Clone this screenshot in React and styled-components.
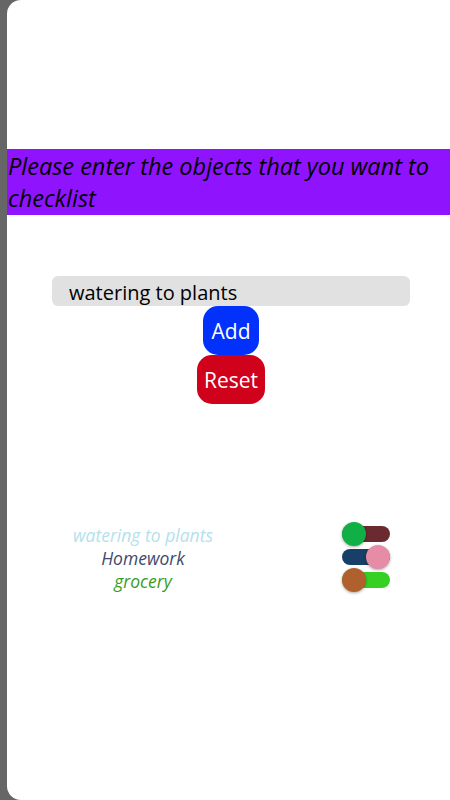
import React, { useState } from 'react';
import styled, { createGlobalStyle } from 'styled-components';

const GlobalStyle = createGlobalStyle`
    html, body {
        overflow: hidden;
    }
    body {
        margin: 0;
        background: #666666;
        font-family: 'Open Sans', 'Noto Sans', sans-serif;
    }
`;

const Frame = styled.div`
    margin-left: 7px;
    min-height: 800px;
    background: #ffffff;
    border-radius: 14px 0 0 14px;
    overflow: hidden;
    padding-top: 149px;
    box-sizing: border-box;
`;

const Banner = styled.h1`
    margin: 0;
    background: #9013fe;
    color: #000;
    font-size: 23.5px;
    font-style: italic;
    font-weight: 500;
    line-height: 32px;
    padding: 1px 0 1px 1px;
`;

const Form = styled.div`
    display: flex;
    flex-direction: column;
    align-items: center;
    margin-top: 61px;
    padding-left: 5px;
`;

const TextBox = styled.input`
    box-sizing: border-box;
    width: 358px;
    height: 30px;
    border: none;
    border-radius: 6px;
    background: #e1e1e1;
    padding: 2px 0 0 17px;
    font-family: 'Open Sans', 'Noto Sans', sans-serif;
    font-size: 20px;
    color: #000;
    outline: none;
`;

const Button = styled.button`
    border: none;
    border-radius: 15px;
    background: ${({ tone }) => tone};
    color: #fff;
    font-family: 'Open Sans', 'Noto Sans', sans-serif;
    font-size: 21px;
    height: 49px;
    padding: 0 ${({ pad }) => pad}px;
    cursor: pointer;
`;

const List = styled.div`
    margin-top: 119px;
    display: flex;
    flex-direction: column;
    gap: 6px;
`;

const Row = styled.div`
    display: grid;
    grid-template-columns: 272px 48px;
    column-gap: 63px;
    align-items: center;
    height: 17px;
`;

const Item = styled.span`
    text-align: center;
    font-style: italic;
    font-size: 17.5px;
    color: ${({ color }) => color};
`;

const Track = styled.div`
    position: relative;
    width: 48px;
    height: 16px;
    margin-top: -3px;
    border-radius: 8px;
    background: ${({ color }) => color};
    cursor: pointer;
`;

const Knob = styled.div`
    position: absolute;
    top: -4px;
    left: ${({ on }) => (on ? '24px' : '0')};
    width: 24px;
    height: 24px;
    border-radius: 50%;
    background: ${({ color }) => color};
    box-shadow: 0 1px 3px rgba(0, 0, 0, 0.35);
`;

const items = [
    { text: 'watering to plants', color: '#b3e2ec', track: '#6a2a30', knob: '#11b046', on: false },
    { text: 'Homework', color: '#3e4a6e', track: '#183f67', knob: '#e68ca6', on: true },
    { text: 'grocery', color: '#3a9c1c', track: '#36d023', knob: '#b0602c', on: false },
];

const App = () => {
    const [value, setValue] = useState('watering to plants');
    const [list, setList] = useState(items);

    const toggle = (i) => {
        setList(list.map((it, idx) => (idx === i ? { ...it, on: !it.on } : it)));
    };

    return (
        <>
            <GlobalStyle />
            <Frame>
                <Banner>Please enter the objects that you want to checklist</Banner>
                <Form>
                    <TextBox value={value} onChange={(e) => setValue(e.target.value)} />
                    <Button tone="#0131fb" pad={9}>Add</Button>
                    <Button tone="#d0011b" pad={7}>Reset</Button>
                </Form>
                <List>
                    {list.map((it, i) => (
                        <Row key={i}>
                            <Item color={it.color}>{it.text}</Item>
                            <Track color={it.track} onClick={() => toggle(i)}>
                                <Knob color={it.knob} on={it.on} />
                            </Track>
                        </Row>
                    ))}
                </List>
            </Frame>
        </>
    );
};

export default App;
